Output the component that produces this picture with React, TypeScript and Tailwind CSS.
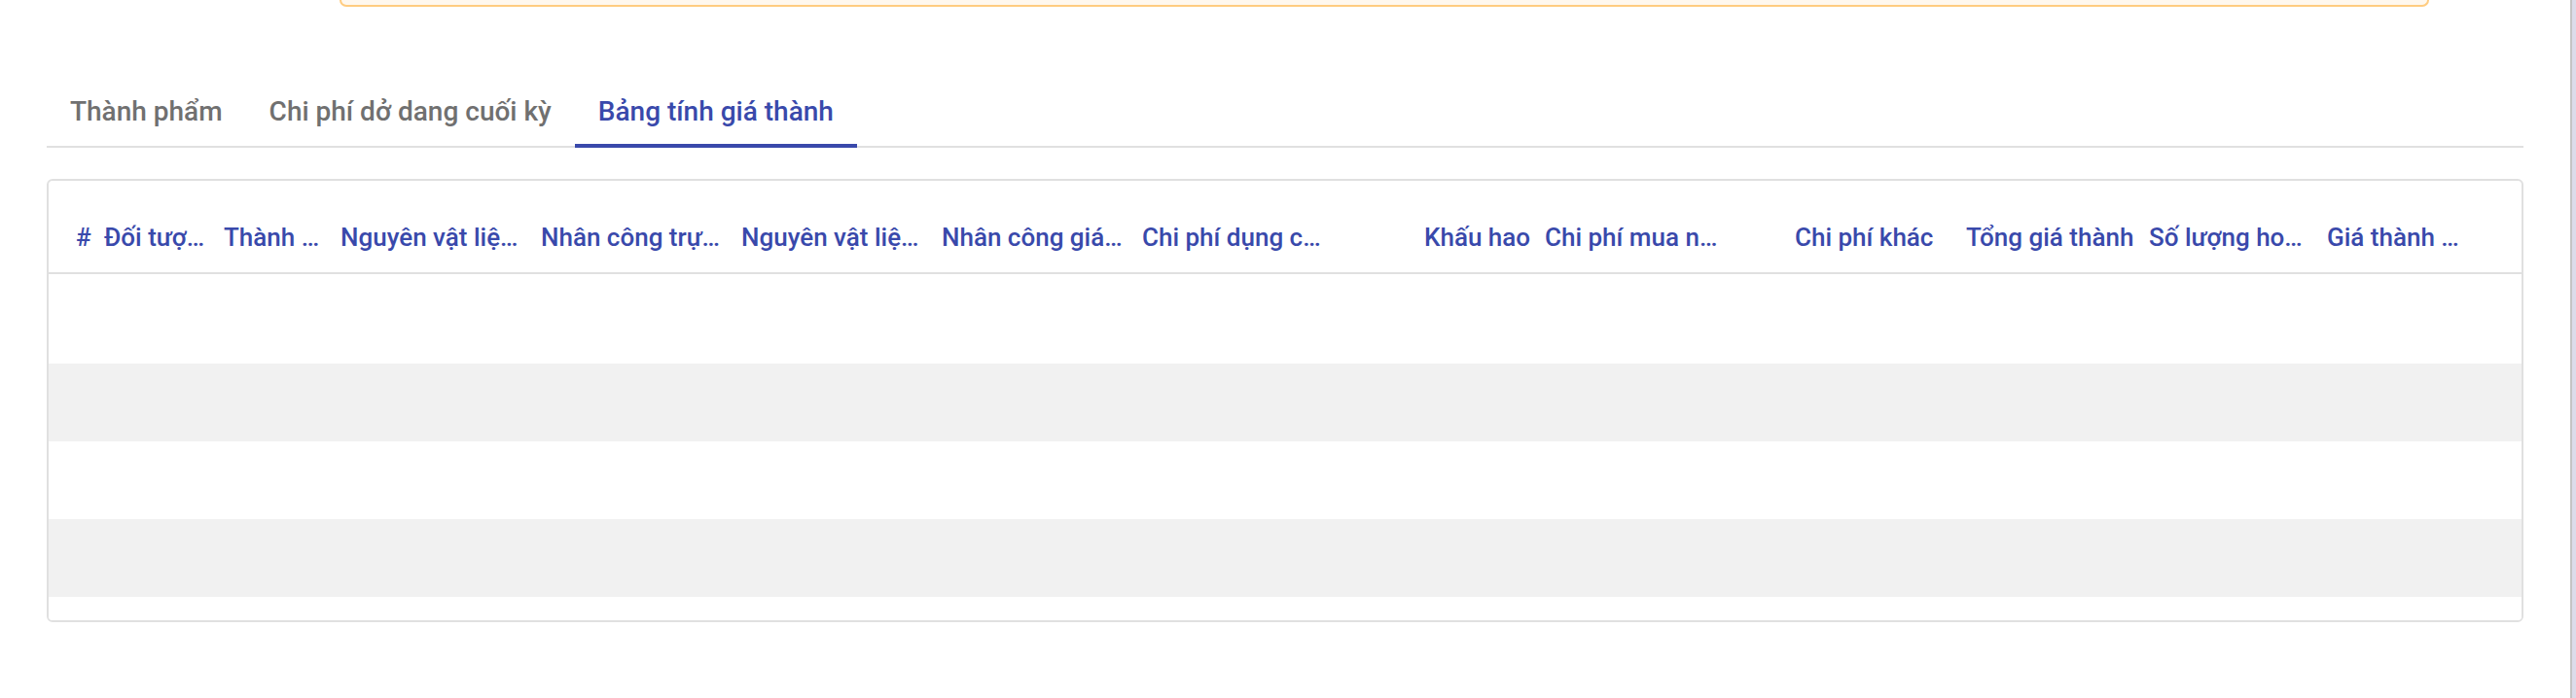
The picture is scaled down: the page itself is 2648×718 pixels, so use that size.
import React from "react";

const tabs = ["Thành phẩm", "Chi phí dở dang cuối kỳ", "Bảng tính giá thành"];

const columns = [
  "#",
  "Đối tượ…",
  "Thành …",
  "Nguyên vật liệ…",
  "Nhân công trự…",
  "Nguyên vật liệ…",
  "Nhân công giá…",
  "Chi phí dụng c…",
  "Khấu hao",
  "Chi phí mua n…",
  "Chi phí khác",
  "Tổng giá thành",
  "Số lượng ho…",
  "Giá thành …",
];

const rows = [
  "h-[92px] bg-white",
  "h-[80px] bg-[#f1f1f1]",
  "h-[80px] bg-white",
  "h-[80px] bg-[#f1f1f1]",
  "h-[24px] bg-white",
];

export default function App() {
  const active = 2;

  return (
    <div
      className="flex h-[718px] w-full bg-white"
      style={{ fontFamily: "Roboto, 'Noto Sans', sans-serif" }}
    >
      <div className="flex flex-1 flex-col px-[48px]">
        {/* notice box cut off at the top */}
        <div className="ml-[301px] mr-[97px] h-[7px] rounded-b-[10px] border-2 border-t-0 border-[#ffcc80] bg-[#fff8ee]" />

        <div className="mt-[64px] flex border-b-2 border-[#e0e0e0]">
          {tabs.map((t, i) => (
            <div
              key={t}
              className={
                "relative flex h-[79px] items-center px-[24px] pt-[8px] text-[28px] font-medium whitespace-nowrap " +
                (i === active ? "text-[#3949ab]" : "text-[#707070]")
              }
            >
              {t}
              {i === active && (
                <span className="absolute bottom-[-2px] left-0 right-0 h-[4px] bg-[#3949ab]" />
              )}
            </div>
          ))}
        </div>

        <div className="mt-[32px] overflow-hidden rounded-[6px] border-2 border-[#e0e0e0]">
          <div className="grid h-[96px] grid-cols-[29px_123px_120px_206px_206px_206px_206px_290px_124px_257px_176px_188px_183px_1fr] items-center border-b-2 border-[#e0e0e0] pl-[28px] pt-[22px]">
            {columns.map((c, i) => (
              <div
                key={i}
                className="whitespace-nowrap text-[26px] font-medium text-[#3949ab]"
              >
                {c}
              </div>
            ))}
          </div>
          {rows.map((r, i) => (
            <div key={i} className={r} />
          ))}
        </div>
      </div>

      <div className="h-full w-[6px] border-l-2 border-[#c4c4c4] bg-[#dcdcea]" />
    </div>
  );
}
